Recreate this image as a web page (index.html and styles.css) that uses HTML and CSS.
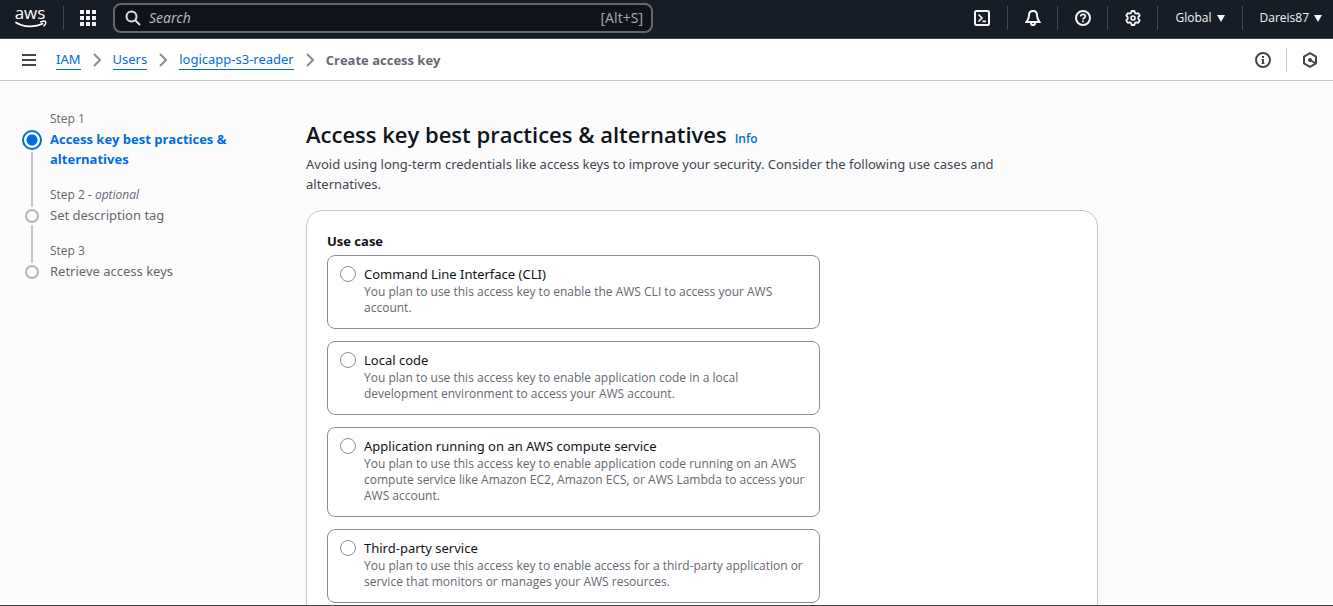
FILE: index.html
```html
<!DOCTYPE html>
<html lang="en">
<head>
<meta charset="utf-8">
<title>Create access key | IAM</title>
<meta name="viewport" content="width=device-width, initial-scale=1">
<link rel="stylesheet" href="styles.css">
</head>
<body>
<header class="topbar">
  <a class="logo" href="#" aria-label="AWS home">
    <svg width="32" height="24" viewBox="0 0 32 24" aria-hidden="true">
      <text x="15" y="13" text-anchor="middle" class="logo-text">aws</text>
      <path d="M1 16.400c7.500 4.800 19 5.200 26.500 1.400" fill="none" stroke="#fff" stroke-width="1.800" stroke-linecap="round"/>
      <path d="M25.600 16c2-.9 4.400-1 4.900-.4.500.7-.2 2.900-1.600 4.400" fill="none" stroke="#fff" stroke-width="1.400" stroke-linecap="round"/>
    </svg>
  </a>
  <button class="cell apps" type="button" aria-label="Services">
    <svg width="16" height="16" viewBox="0 0 16 16" fill="#f3f3f7"><path d="M0 0h4v4H0zM6 0h4v4H6zM12 0h4v4h-4zM0 6h4v4H0zM6 6h4v4H6zM12 6h4v4h-4zM0 12h4v4H0zM6 12h4v4H6zM12 12h4v4h-4z"/></svg>
  </button>
  <label class="search">
    <svg width="16" height="16" viewBox="0 0 16 16" fill="none" stroke="#dedee3" stroke-width="2"><circle cx="6.500" cy="6.500" r="5"/><path d="M10 10l5 5"/></svg>
    <input class="search-input" type="search" placeholder="Search" aria-label="Search">
    <span class="shortcut">[Alt+S]</span>
  </label>
  <nav class="tools" aria-label="Account tools">
    <button class="cell" type="button" aria-label="CloudShell">
      <svg class="icon" viewBox="0 0 16 16"><rect x="1" y="1" width="14" height="14" rx="1.500"/><path d="M4.500 4.500L8 8l-3.500 3.500M8.500 11.300H12" stroke-width="1.700"/></svg>
    </button>
    <button class="cell" type="button" aria-label="Notifications">
      <svg class="icon" viewBox="0 0 16 16"><path d="M8 1C5.500 1 4 2.900 4 5.200c0 3.300-.8 4.600-2.500 6.800h13C12.800 9.800 12 8.500 12 5.200 12 2.900 10.500 1 8 1z"/><path d="M6 12v1.200C6 14.300 6.800 15 8 15s2-.7 2-1.800V12"/></svg>
    </button>
    <button class="cell" type="button" aria-label="Help">
      <svg class="icon" viewBox="0 0 16 16"><circle cx="8" cy="8" r="7"/><path d="M5.700 6.500C5.700 5 6.700 4.300 8 4.300s2.300.8 2.300 2c0 1.700-2.300 1.600-2.300 3.300M8 10.500v1.800" stroke-width="1.700"/></svg>
    </button>
    <button class="cell" type="button" aria-label="Settings">
      <svg class="icon" viewBox="0 0 16 16"><path d="M6.600 1h2.800l.5 1.900 1.400.8 1.900-.5L14.700 5.600l-1.400 1.500v1.800l1.400 1.500-1.500 2.400-1.900-.5-1.400.8L9.400 15H6.600l-.5-1.900-1.400-.8-1.900.5-1.500-2.400 1.400-1.500V7.100L1.300 5.600l1.500-2.400 1.900.5 1.400-.8z" stroke-linejoin="round" stroke-width="1.800"/><circle cx="8" cy="8" r="2" stroke-width="1.700"/></svg>
    </button>
    <button class="cell menu" type="button">Global <svg width="8" height="7" viewBox="0 0 8 7" fill="#f3f3f7"><path d="M0 0h8L4 7z"/></svg></button>
    <button class="cell menu" type="button">Dareis87 <svg width="8" height="7" viewBox="0 0 8 7" fill="#f3f3f7"><path d="M0 0h8L4 7z"/></svg></button>
  </nav>
</header>
<div class="crumbbar">
  <button class="plain" type="button" aria-label="Open navigation">
    <svg width="14" height="12" viewBox="0 0 14 12" fill="#424650"><path d="M0 0h14v2H0zM0 5h14v2H0zM0 10h14v2H0z"/></svg>
  </button>
  <nav class="crumbs" aria-label="Breadcrumbs">
    <a class="crumb" href="#">IAM</a>
    <svg class="chevron" viewBox="0 0 8 14"><path d="M1 1l6 6-6 6"/></svg>
    <a class="crumb" href="#">Users</a>
    <svg class="chevron" viewBox="0 0 8 14"><path d="M1 1l6 6-6 6"/></svg>
    <a class="crumb" href="#">logicapp-s3-reader</a>
    <svg class="chevron" viewBox="0 0 8 14"><path d="M1 1l6 6-6 6"/></svg>
    <span class="current">Create access key</span>
  </nav>
  <div class="panels">
    <button class="panel-button" type="button" aria-label="Info panel">
      <svg class="icon dark" viewBox="0 0 16 16"><circle cx="8" cy="8" r="7"/><path d="M8 4v2M8 7v5"/><path d="M6.500 7.500H8M6.500 11.500h3" stroke-width="1"/></svg>
    </button>
    <button class="panel-button" type="button" aria-label="Amazon Q">
      <svg class="icon dark" viewBox="0 0 16 16"><path d="M8 1.200l6 3.400v6.800l-6 3.400-6-3.400V4.600z" stroke-linejoin="round"/><path d="M8 8l5 3"/><circle cx="8" cy="8" r="2" fill="#424650" stroke="none"/></svg>
    </button>
  </div>
</div>
<main class="page">
  <ol class="steps">
    <li class="step active">
      <div class="rail"><span class="marker"></span></div>
      <div class="step-body">
        <div class="step-label">Step 1</div>
        <div class="step-title">Access key best practices &amp; alternatives</div>
      </div>
    </li>
    <li class="step">
      <div class="rail"><span class="marker"></span></div>
      <div class="step-body">
        <div class="step-label">Step 2 <i>- optional</i></div>
        <div class="step-title">Set description tag</div>
      </div>
    </li>
    <li class="step">
      <div class="rail"><span class="marker"></span></div>
      <div class="step-body">
        <div class="step-label">Step 3</div>
        <div class="step-title">Retrieve access keys</div>
      </div>
    </li>
  </ol>
  <section class="content">
    <div class="heading">
      <h1 class="title">Access key best practices &amp; alternatives</h1>
      <a class="info" href="#">Info</a>
    </div>
    <p class="lead">Avoid using long-term credentials like access keys to improve your security. Consider the following use cases and alternatives.</p>
    <fieldset class="card">
      <legend class="legend">Use case</legend>
      <div class="choices">
        <label class="choice">
          <input class="radio" type="radio" name="usecase">
          <span class="choice-body"><span class="choice-title">Command Line Interface (CLI)</span><span class="choice-text">You plan to use this access key to enable the AWS CLI to access your AWS account.</span></span>
        </label>
        <label class="choice">
          <input class="radio" type="radio" name="usecase">
          <span class="choice-body"><span class="choice-title">Local code</span><span class="choice-text">You plan to use this access key to enable application code in a local development environment to access your AWS account.</span></span>
        </label>
        <label class="choice">
          <input class="radio" type="radio" name="usecase">
          <span class="choice-body"><span class="choice-title">Application running on an AWS compute service</span><span class="choice-text">You plan to use this access key to enable application code running on an AWS compute service like Amazon EC2, Amazon ECS, or AWS Lambda to access your AWS account.</span></span>
        </label>
        <label class="choice">
          <input class="radio" type="radio" name="usecase">
          <span class="choice-body"><span class="choice-title">Third-party service</span><span class="choice-text">You plan to use this access key to enable access for a third-party application or service that monitors or manages your AWS resources.</span></span>
        </label>
      </div>
    </fieldset>
  </section>
</main>
</body>
</html>
```
FILE: styles.css
```css
* { box-sizing: border-box; }

body {
  margin: 0;
  height: 100vh;
  display: flex;
  flex-direction: column;
  overflow: hidden;
  background: #fcfcfd;
  color: #0f141a;
  font: 13px/20px "Noto Sans", "Open Sans", sans-serif;
  border-bottom: 1px solid #424650;
}

button { font: inherit; color: inherit; background: none; border: 0; padding: 0; }

a { color: #006ce0; text-decoration: none; }

.topbar {
  flex: none;
  display: flex;
  align-items: center;
  padding: 3px 0 5px 15px;
  background: #161d26;
  border-bottom: 1px solid #424650;
}

.logo { display: flex; padding-right: 16px; }
.logo svg { overflow: visible; }
.logo-text { font: 500 17px/20px "Open Sans", sans-serif; fill: #fff; }

.cell {
  display: flex;
  align-items: center;
  justify-content: center;
  width: 50px;
  height: 24px;
  border-left: 1px solid #424650;
}
.apps { padding-right: 2px; }

.search {
  flex: 0 1 540px;
  display: flex;
  align-items: center;
  gap: 8px;
  height: 30px;
  padding: 0 8px 0 10px;
  background: #0f141a;
  border: 2px solid #656871;
  border-radius: 8px;
}

.search-input {
  flex: 1;
  min-width: 0;
  padding: 0;
  border: 0;
  outline: 0;
  background: none;
  color: #fff;
  font: inherit;
  font-size: 14px;
}
.search-input::placeholder { color: #b4b4bb; font-style: italic; }
.shortcut { color: #a4a4ad; font-size: 14px; }

.tools { display: flex; margin-left: auto; }
.tools .cell:first-child { border-left: 0; }
.menu {
  width: auto;
  gap: 5px;
  padding: 0 17px;
  color: #f3f3f7;
  font-family: "Open Sans", sans-serif;
  font-size: 12px;
  font-weight: 500;
}
.menu:last-child { padding-right: 11px; }

.icon { width: 16px; height: 16px; fill: none; stroke: #f3f3f7; stroke-width: 2; }
.dark { stroke: #424650; }

.crumbbar {
  flex: none;
  display: flex;
  align-items: center;
  height: 42px;
  padding: 0 15px 0 22px;
  background: #fff;
  border-bottom: 1px solid #c6c6cd;
}
.plain { display: flex; margin-right: 20px; }
.crumbs { display: flex; align-items: center; gap: 12px; }
.crumb { line-height: 19px; border-bottom: 1px solid #006ce0; }
.chevron { width: 8px; height: 14px; fill: none; stroke: #8c8c94; stroke-width: 2; }
.current { color: #656871; font-family: "Open Sans", sans-serif; font-weight: 700; }
.panels { display: flex; margin-left: auto; }
.panel-button { display: flex; align-items: center; height: 24px; }
.panel-button + .panel-button { margin-left: 15px; padding-left: 15px; border-left: 1px solid #c6c6cd; }

.page {
  flex: 1;
  min-height: 0;
  overflow: hidden;
  display: grid;
  grid-template-columns: 220px minmax(0, 792px);
  column-gap: 64px;
  align-items: start;
  padding: 30px 22px 0;
}

.steps { margin: 0; padding: 0; list-style: none; color: #656871; }
.step { display: flex; gap: 8px; }
.step-body { flex: 1; padding-bottom: 18px; }
.step-label { margin-bottom: 2px; font-family: "Open Sans", sans-serif; font-size: 12px; line-height: 16px; }
.active .step-title { color: #006ce0; font-family: "Open Sans", sans-serif; font-weight: 700; }

.rail { display: flex; flex-direction: column; align-items: center; width: 20px; }
.rail::before { content: ""; width: 2px; height: 20px; background: #c6c6cd; }
.rail::after { content: ""; flex: 1; width: 2px; background: #c6c6cd; }
.step:last-child .rail::after { background: none; }
.marker { width: 14px; height: 14px; margin: 2px 0; border: 2px solid #b4b4bb; border-radius: 50%; }
.active .rail::before { height: 17px; background: none; }
.active .marker {
  width: 20px;
  height: 20px;
  border-color: #006ce0;
  background: radial-gradient(circle, #006ce0 5px, transparent 6px);
}

.heading { display: flex; align-items: baseline; gap: 8px; margin-top: 8px; font-family: "Open Sans", sans-serif; }
.title { margin: 0; font-size: 22px; line-height: 30px; font-weight: 650; }
.info { font-size: 12px; line-height: 16px; font-weight: 600; }
.lead { margin: 5px 0 16px; padding-right: 40px; color: #424650; }

.card {
  margin: 0;
  padding: 20px 20px 60px;
  background: #fff;
  border: 1px solid #c6c6cd;
  border-radius: 16px;
}
.legend { float: left; width: 100%; margin-bottom: 4px; padding: 0; font-family: "Open Sans", sans-serif; font-weight: 700; }
.choices { clear: both; display: flex; flex-direction: column; gap: 12px; max-width: 493px; }
.choice {
  display: flex;
  gap: 8px;
  padding: 8px 12px 12px;
  border: 1px solid #8c8c94;
  border-radius: 8px;
}
.radio {
  appearance: none;
  flex: none;
  width: 16px;
  height: 16px;
  margin: 2px 0;
  background: #fff;
  border: 1px solid #8c8c94;
  border-radius: 50%;
}
.radio:checked { border: 5px solid #006ce0; }
.choice-body { display: flex; flex-direction: column; }
.choice-text { color: #656871; font-family: "Open Sans", sans-serif; font-size: 12px; line-height: 16px; }
```
